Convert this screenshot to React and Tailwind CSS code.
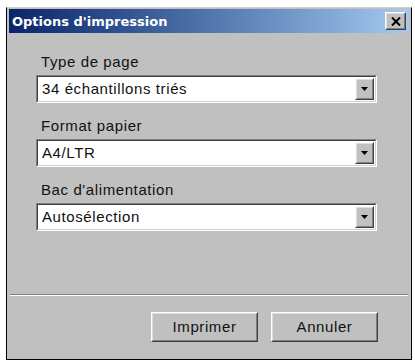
import React from "react";

function Raised({ className = "", innerClassName = "", children }) {
  return (
    <div
      className={
        "border border-t-white border-l-white border-b-[#404040] border-r-[#404040] bg-[#c0c0c0] " +
        className
      }
    >
      <div
        className={
          "h-full w-full border border-t-[#dedede] border-l-[#dedede] border-b-[#808080] border-r-[#808080] flex items-center justify-center " +
          innerClassName
        }
      >
        {children}
      </div>
    </div>
  );
}

function Combo({ value }) {
  return (
    <div className="h-[28px] w-[341px] border border-t-[#808080] border-l-[#808080] border-b-white border-r-white">
      <div className="h-full w-full border border-t-[#404040] border-l-[#404040] border-b-[#d4d0c8] border-r-[#d4d0c8] bg-white flex items-center">
        <span className="flex-1 pl-[4px] text-[15px] tracking-[0.6px] leading-[18px] text-[#111]">
          {value}
        </span>
        <Raised className="h-[22px] w-[19px] mr-[1px]">
          <svg width="7" height="4" viewBox="0 0 7 4">
            <polygon points="0,0 7,0 3.5,4" fill="#000" />
          </svg>
        </Raised>
      </div>
    </div>
  );
}

function Field({ label, value }) {
  return (
    <div className="flex flex-col">
      <div className="ml-[5px] h-[18px] text-[15px] leading-[18px] tracking-[0.6px] text-[#111]">
        {label}
      </div>
      <div className="mt-[4px]">
        <Combo value={value} />
      </div>
    </div>
  );
}

export default function App() {
  return (
    <div className="w-[415px] h-[362px] bg-white pl-[6px] pt-[7px] font-['Liberation_Sans',Arial,sans-serif]">
      <div className="w-[406px] h-[353px] border border-t-[#d4d0c8] border-l-black border-r-black border-b-black bg-[#c0c0c0] pt-[1px] px-[2px] pb-[2px] flex flex-col">
        <div className="h-[24px] flex items-center justify-between bg-gradient-to-r from-[#0a246a] to-[#a6caf0] pl-[3px] pr-[3px]">
          <span className="font-['DejaVu_Sans',sans-serif] font-bold text-[13px] leading-[16px] text-white mt-[2px]">
            Options d'impression
          </span>
          <Raised className="h-[18px] w-[21px]">
            <svg width="10" height="9" viewBox="0 0 10 9">
              <path d="M1 0.5 L9 8.5 M9 0.5 L1 8.5" stroke="#000" strokeWidth="2" />
            </svg>
          </Raised>
        </div>
        <div className="flex-1 flex flex-col pt-[20px] pb-[15px]">
          <div className="pl-[27px] flex flex-col gap-[14px]">
            <Field label="Type de page" value="34 échantillons triés" />
            <Field label="Format papier" value="A4/LTR" />
            <Field label="Bac d'alimentation" value="Autosélection" />
          </div>
          <div className="flex-1" />
          <div className="mx-[1px] h-[2px] border-t border-t-[#808080] border-b border-b-white" />
          <div className="mt-[16px] flex justify-end gap-[13px] pr-[31px]">
            <Raised className="h-[30px] w-[107px]">
              <span className="text-[15px] tracking-[0.6px] text-[#111]">Imprimer</span>
            </Raised>
            <Raised className="h-[30px] w-[107px]">
              <span className="text-[15px] tracking-[0.6px] text-[#111]">Annuler</span>
            </Raised>
          </div>
        </div>
      </div>
    </div>
  );
}
